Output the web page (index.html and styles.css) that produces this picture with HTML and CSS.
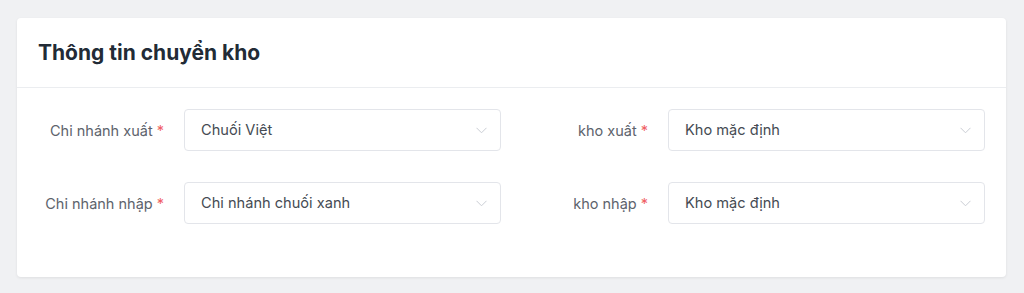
FILE: index.html
```html
<!DOCTYPE html>
<html lang="vi">
<head>
    <meta charset="UTF-8">
    <meta name="viewport" content="width=device-width, initial-scale=1.0">
    <title>Thông tin chuyển kho</title>
    <link rel="stylesheet" href="styles.css">
</head>
<body>
    <div class="card">
        <div class="card-header">
            <h2>Thông tin chuyển kho</h2>
        </div>
        <div class="card-body">
            <div class="field">
                <label>Chi nhánh xuất <span class="req">*</span></label>
                <div class="select">
                    <span>Chuối Việt</span>
                    <svg class="chevron" width="11" height="7" viewBox="0 0 11 7"><path d="M0.5 0.8 L5.5 5.8 L10.5 0.8" fill="none" stroke="#c9cdd4" stroke-width="1"/></svg>
                </div>
            </div>
            <div class="field">
                <label>kho xuất <span class="req">*</span></label>
                <div class="select">
                    <span>Kho mặc định</span>
                    <svg class="chevron" width="11" height="7" viewBox="0 0 11 7"><path d="M0.5 0.8 L5.5 5.8 L10.5 0.8" fill="none" stroke="#c9cdd4" stroke-width="1"/></svg>
                </div>
            </div>
            <div class="field">
                <label>Chi nhánh nhập <span class="req">*</span></label>
                <div class="select">
                    <span>Chi nhánh chuối xanh</span>
                    <svg class="chevron" width="11" height="7" viewBox="0 0 11 7"><path d="M0.5 0.8 L5.5 5.8 L10.5 0.8" fill="none" stroke="#c9cdd4" stroke-width="1"/></svg>
                </div>
            </div>
            <div class="field">
                <label>kho nhập <span class="req">*</span></label>
                <div class="select">
                    <span>Kho mặc định</span>
                    <svg class="chevron" width="11" height="7" viewBox="0 0 11 7"><path d="M0.5 0.8 L5.5 5.8 L10.5 0.8" fill="none" stroke="#c9cdd4" stroke-width="1"/></svg>
                </div>
            </div>
        </div>
    </div>
</body>
</html>
```

FILE: styles.css
```css
body {
    margin: 0;
    padding: 18px 18px 17px 17px;
    background-color: #f0f1f3;
    font-family: Inter, "Noto Sans", sans-serif;
}
.card {
    background: white;
    border-radius: 4px;
    box-shadow: 0 1px 3px rgba(0,0,0,0.08);
}
.card-header {
    height: 69px;
    display: flex;
    align-items: center;
    padding: 0 21px;
    border-bottom: 1px solid #ebedf0;
}
.card-header h2 {
    margin: 0;
    font-size: 21px;
    font-weight: 700;
    color: #222b36;
}
.card-body {
    display: grid;
    grid-template-columns: 1fr 1fr;
    column-gap: 17px;
    row-gap: 31px;
    padding: 21px 21px 53px 17px;
}
.field {
    display: flex;
    align-items: center;
}
label {
    width: 150px;
    flex-shrink: 0;
    padding-right: 20px;
    box-sizing: border-box;
    text-align: right;
    font-size: 14.5px;
    color: #5d636c;
}
.req {
    color: #f05f66;
}
.select {
    flex: 1;
    height: 42px;
    box-sizing: border-box;
    display: flex;
    align-items: center;
    justify-content: space-between;
    padding: 0 13px 0 16px;
    border: 1px solid #e3e5ea;
    border-radius: 4px;
    font-size: 14.6px;
    color: #454b53;
}
```
